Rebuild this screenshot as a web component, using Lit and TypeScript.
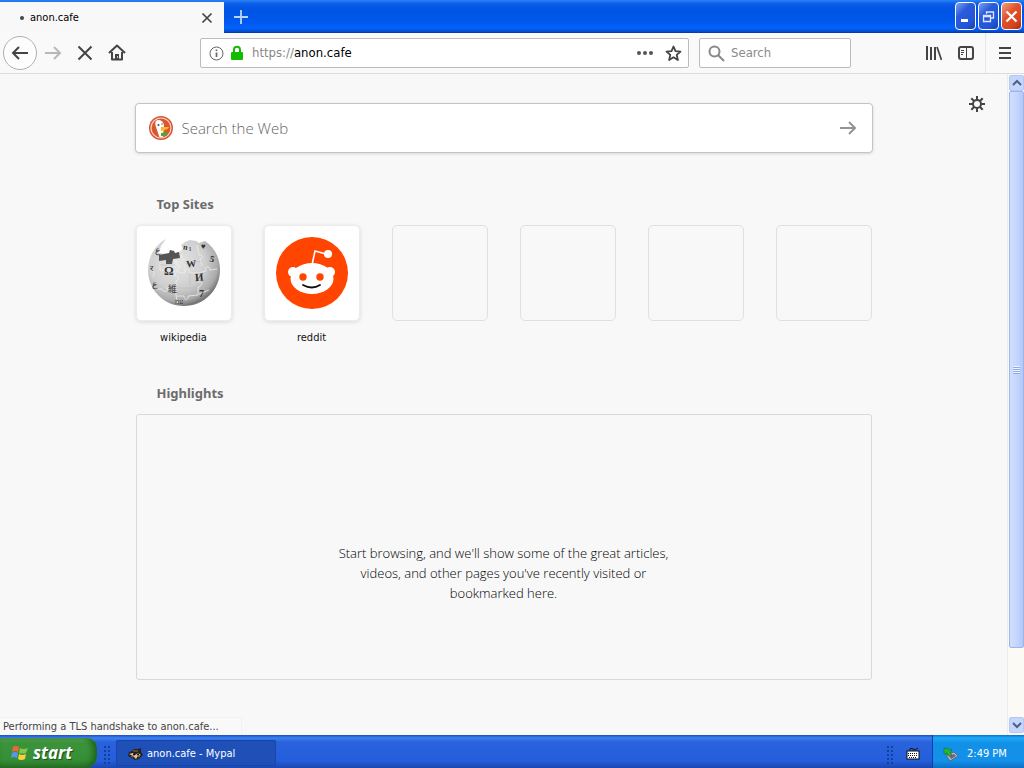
import { LitElement, html, css, svg } from "lit";
import { customElement, state } from "lit/decorators.js";

interface Site { name: string; icon: unknown; }

const wikipedia = svg`
  <defs>
    <radialGradient id="globe" cx="40%" cy="35%" r="65%">
      <stop offset="0" stop-color="#e6e6e6"/><stop offset=".6" stop-color="#cfcfcf"/><stop offset=".88" stop-color="#aaa"/><stop offset="1" stop-color="#777"/>
    </radialGradient>
  </defs>
  <path d="M19 3L14 10L12 17L21 18L22 20L32 16L36 13L34 9L38 6L43 4L49 5L52 7L58 5C67 11 73 21 73 34C73 54 57 70 37 70C17 70 1 54 1 34C1 21 8 9 19 3Z" fill="url(#globe)"/>
  <path d="M12 19L22 17L23 14L27 15L28 17L32 16L33 22L26 23L25 28L19 28L19 24L12 25Z" fill="#555"/>
  <path d="M13 27V34H17C18 31 22 31 22 35H28V40C32 39 33 44 29 45V52H20C21 56 16 57 15 53H4M29 24V28C33 28 34 32 30 33V36L38 37C38 32 43 32 43 37H51V46C56 45 56 50 51 51V59L41 60C42 64 37 65 37 60H29V52M34 18L36 24C40 22 42 26 38 28V36M51 37L59 35C57 30 63 29 63 34L70 33M50 9L52 19C56 18 57 22 53 23L55 30M52 58L62 54M29 60L31 68M4 35C8 34 8 40 5 41" fill="none" stroke="#eee" stroke-width=".8"/>
  <path d="M13 29H28M38 28L54 25M31 52H50M43 37V50" fill="none" stroke="#bbb" stroke-width=".6"/>
  <g fill="#333" font-family="Liberation Serif, serif">
    <text x="17" y="39" font-size="12" font-weight="700">Ω</text>
    <text x="39" y="31" font-size="10" font-weight="700" transform="rotate(-5 44 26)">W</text>
    <text x="48" y="45" font-size="11" font-weight="700" transform="rotate(-5 51 42)">И</text>
    <text x="21" y="56" font-size="9" font-family="Noto Sans CJK JP, sans-serif">維</text>
    <text x="63" y="26" font-size="9" font-weight="700" transform="rotate(12 65 22)">5</text>
    <text x="52" y="61" font-size="10" font-weight="700">7</text>
    <text x="36" y="14" font-size="8" font-weight="700" transform="rotate(10 40 12)">n</text>
    <text x="42" y="15" font-size="8">ı</text>
    <text x="54" y="13" font-size="8">♥</text>
    <text x="3" y="35" font-size="8">र</text>
    <text x="5" y="51" font-size="9">ﻉ</text>
    <text x="8" y="17" font-size="9">ع</text>
    <text x="28" y="68" font-size="7">עמ</text>
  </g>`;

const reddit = svg`
  <circle cx="37" cy="37" r="36" fill="#ff4500"/>
  <g fill="#fff"><circle cx="18" cy="36" r="5"/><circle cx="55" cy="36" r="5"/><ellipse cx="37" cy="42.500" rx="21.500" ry="15.500"/><circle cx="53" cy="18" r="4"/></g>
  <path d="M37 29L40 15L51 18" fill="none" stroke="#fff" stroke-width="1.600"/>
  <circle cx="28" cy="41" r="3.700" fill="#ff4500"/><circle cx="45" cy="41" r="3.700" fill="#ff4500"/>
  <path d="M28 49Q37 54 45 49" fill="none" stroke="#111" stroke-width="1.800" stroke-linecap="round"/>`;

const duck = svg`
  <circle cx="12" cy="12" r="12" fill="#d9532c"/><circle cx="12" cy="12" r="10" fill="#dd5533" stroke="#f7d5c8" stroke-width="1.200"/>
  <path d="M7 5C9 3 14 4 15 9L14 21C12 22 10 21 10 20L7 11C6 8 6 6 7 5Z" fill="#fff"/>
  <path d="M12 11L20 11C19 13 17 14 12 15Z" fill="#fdb913"/><path d="M12 17L18 16V20L12 20Z" fill="#5aa13c"/>
  <circle cx="9.500" cy="9" r="1" fill="#445"/><circle cx="13" cy="8" r=".7" fill="#445"/>`;

@customElement("app-root")
export class AppRoot extends LitElement {
  @state() private sites: (Site | null)[] = [
    { name: "wikipedia", icon: wikipedia }, { name: "reddit", icon: reddit }, null, null, null, null,
  ];

  static styles = css`
    :host { display: flex; flex-direction: column; height: 100vh; overflow: hidden; background: #f8f8f8; color: #111; font: 11px/16px Tahoma, "DejaVu Sans Condensed", "Noto Sans", sans-serif; }
    * { box-sizing: border-box; }
    button, input { font: inherit; color: inherit; border: 0; background: none; padding: 0; margin: 0; outline: 0; }
    button { display: grid; place-items: center; flex: none; }
    svg { display: block; flex: none; }
    .line { fill: none; stroke: #444; stroke-width: 2; }
    h2, p { margin: 0; }

    .tabs { display: flex; height: 33px; flex: none; background: linear-gradient(#2a83f8 0, #0a5ce8 4px, #0054e3 10px, #0058ee 22px, #0262fb 28px, #0450d8 31px, #0236a8 33px); }
    .tab { display: flex; align-items: center; width: 224px; margin-top: 2px; padding: 0 10px 0 20px; background: #f8f8f8; }
    .dot { width: 4px; height: 4px; border-radius: 50%; background: #444; margin-right: 6px; }
    .title { flex: 1; color: #000; }
    .newtab { width: 34px; }
    .window { display: flex; gap: 2px; margin-left: auto; padding: 2px 2px 3px 0; }
    .window button { width: 21px; height: 28px; border: 1px solid #fff; border-radius: 4px; background: linear-gradient(135deg, #7da1f4, #2a5bdc 35%, #2355d8 75%, #1840ad); }
    .window .close { background: linear-gradient(135deg, #f0a084, #e0532c 40%, #d4441f 75%, #a82c0c); }

    .nav { display: flex; align-items: center; height: 41px; flex: none; background: #f9f9fa; border-bottom: 1px solid #ddd; padding: 0 1px 0 3px; }
    .back { width: 34px; height: 34px; border: 1px solid #b0b0b0; border-radius: 50%; background: #fdfdfd; }
    .tool { width: 32px; height: 32px; }
    .address { display: flex; align-items: center; flex: 1; margin-left: 67px; height: 30px; padding: 0 6px 0 8px; background: #fff; border: 1px solid #bcbcbc; border-radius: 2px; font-size: 13px; }
    .url { position: relative; flex: 1; min-width: 0; margin-left: 8px; }
    .url input { display: block; width: 100%; height: 20px; color: transparent; caret-color: #000; }
    .urltext { position: absolute; inset: 0; line-height: 20px; color: #000; pointer-events: none; }
    .urltext span { color: #888; }
    .lock { margin-left: 6px; }
    .dots { margin-right: 12px; }
    .find { display: flex; align-items: center; gap: 6px; width: 152px; margin: 0 67px 0 10px; height: 30px; padding: 0 8px; background: #fff; border: 1px solid #bcbcbc; border-radius: 2px; font-size: 13px; }
    .find input { flex: 1; min-width: 0; }
    input::placeholder { color: #8a8a8a; opacity: 1; }
    .menu { width: 38px; height: 40px; margin-left: 3px; border-left: 1px solid #e6e6e6; }

    .view { position: relative; display: flex; flex: 1; min-height: 0; }
    .page { flex: 1; min-width: 0; display: flex; justify-content: center; position: relative; padding: 29px 24px 0; }
    .gear { position: absolute; right: 20px; top: 20px; width: 20px; height: 20px; }
    .column { width: 100%; max-width: 736px; }
    .search { display: flex; align-items: center; gap: 9px; height: 50px; margin: 0 -1px; padding: 0 15px 0 13px; background: #fff; border: 1px solid #c4c4c4; border-radius: 4px; box-shadow: 0 1px 3px #0002; font: 300 15px/20px "Open Sans", "Noto Sans", sans-serif; }
    .search input { flex: 1; min-width: 0; height: 30px; }
    .search input::placeholder { color: #666; }
    h2 { font: 700 13px/20px "Noto Sans", sans-serif; color: #6c6c6c; padding-left: 21px; }
    .top { margin-top: 41px; }
    .sites { display: grid; grid-template-columns: repeat(6, 96px); justify-content: space-between; margin: 11px 0 38px; }
    .site { height: 120px; color: #111; text-decoration: none; text-align: center; }
    .tile { display: grid; place-items: center; height: 96px; margin-bottom: 9px; border: 1px solid #e0e0e0; border-radius: 5px; }
    .sites > .tile { margin-bottom: 0; }
    .site .tile { background: #fff; border-color: #ececec; box-shadow: 0 1px 4px #0002; }
    .empty { display: flex; align-items: center; justify-content: center; height: 266px; margin-top: 11px; padding-top: 52px; border: 1px solid #d8d8d8; border-radius: 3px; }
    .empty p { width: 344px; text-align: center; font: 13px/20px "Open Sans", "Noto Sans", sans-serif; font-weight: 300; color: #000; }
    .scroll { display: flex; flex-direction: column; width: 17px; padding: 1px 0 2px 1px; background: #fbfaf5; border-left: 1px solid #eeede5; }
    .scroll button { height: 16px; border: 1px solid #b4c8f6; border-radius: 2px; background: #c6d5fc; }
    .track { flex: 1; }
    .thumb { height: 89%; display: grid; place-items: center; background: linear-gradient(90deg, #d2defe, #c3d3fd 60%, #b4c8f6); border: 1px solid #9db5ec; border-radius: 2px; }
    .status { position: absolute; left: 0; bottom: 0; width: 242px; height: 18px; padding-left: 3px; line-height: 18px; color: #444; background: #f9f9f9; border: solid #f2f2f2; border-width: 1px 1px 0 0; white-space: nowrap; }

    .taskbar { display: flex; align-items: stretch; height: 33px; flex: none; color: #fff; background: linear-gradient(#1c50c0 0, #3a81ee 3px, #2a62dc 7px, #245edb 26px, #1c47b0); }
    .start { display: flex; align-items: center; width: 97px; margin-top: 3px; padding-left: 11px; gap: 4px; border-radius: 0 10px 12px 0; background: linear-gradient(#66b764 0, #3c943c 5px, #358f35 22px, #2b742b); box-shadow: inset -4px 0 6px #1c641c; font: italic 700 17px/24px "Noto Sans", sans-serif; text-shadow: 1px 1px 1px #1a4a1a; }
    .grip { width: 7px; margin: 10px 6px 4px; background: radial-gradient(circle, #143f9e 1px, transparent 1px) 0 0 / 4px 4px; }
    .task { display: flex; align-items: center; gap: 4px; width: 160px; margin: 5px 0 2px; padding: 2px 0 0 11px; background: #1e50b8; border: 1px solid #1846a8; border-radius: 2px; }
    .keyboard { display: grid; place-items: center; margin: 4px 12px 0 7px; }
    .right { margin-left: auto; }
    .tray { display: flex; align-items: center; gap: 9px; width: 92px; padding: 5px 0 0 10px; border-left: 1px solid #0b3fa8; background: linear-gradient(#0f70d0 0, #1cabf4 3px, #1290e8 8px, #1391ea 26px, #0e6fc4); }
  `;

  render() {
    return html`
      <header class="tabs">
        <div class="tab"><span class="dot"></span><span class="title">anon.cafe</span>
          <button aria-label="Close tab"><svg width="14" height="14" viewBox="0 0 14 14"><path class="line" d="M2.500 2.500L11.500 11.500M11.500 2.500L2.500 11.500" style="stroke-width:1.700"/></svg></button>
        </div>
        <button class="newtab" aria-label="New tab"><svg width="16" height="16"><path d="M8 1V15M1 8H15" stroke="#b9d6ff" stroke-width="1.800"/></svg></button>
        <div class="window">
          <button aria-label="Minimize"><svg width="15" height="15"><path d="M3 11.500H10" stroke="#fff" stroke-width="3"/></svg></button>
          <button aria-label="Restore"><svg width="15" height="15" fill="none" stroke="#dce7ff"><path d="M5.500 5V3H12.500V9H10" stroke-width="1.300"/><path d="M2.500 6.500H9.500V12.500H2.500ZM2.500 7.500H9.500" stroke-width="1.300"/></svg></button>
          <button class="close" aria-label="Close"><svg width="15" height="15"><path d="M2.500 2.500L12.500 12.500M12.500 2.500L2.500 12.500" stroke="#fff" stroke-width="2.200"/></svg></button>
        </div>
      </header>
      <nav class="nav">
        <button class="back" aria-label="Back"><svg width="18" height="18" class="line"><path d="M17 9H2M8 3L2 9L8 15"/></svg></button>
        <button class="tool" aria-label="Forward"><svg width="18" height="18" class="line" style="stroke:#b8b8b8"><path d="M1 9H16M10 3L16 9L10 15"/></svg></button>
        <button class="tool" aria-label="Stop"><svg width="16" height="16" class="line"><path d="M1.500 1.500L14.500 14.500M14.500 1.500L1.500 14.500"/></svg></button>
        <button class="tool" aria-label="Home"><svg width="18" height="18" viewBox="0 0 18 18" class="line"><path d="M1 9L9 1.500L17 9M4 8V15.500H14V8" stroke-linejoin="round"/><path d="M7 16V10H11V16" fill="#444" stroke="none"/><path d="M9.500 12V14" stroke="#ccc" stroke-width="1"/></svg></button>
        <div class="address">
          <svg width="15" height="15" class="line" style="stroke-width:1;stroke:#666"><circle cx="7.500" cy="7.500" r="6.500"/><path d="M7.500 6.500V11M7.500 3.500V5" style="stroke-width:1.700"/></svg>
          <svg class="lock" width="14" height="16"><path d="M4 8V4.500C4 .8 10 .8 10 4.500V8" fill="none" stroke="#12bc00" stroke-width="2"/><rect x="1" y="7" width="12" height="8" rx="1" fill="#12bc00"/></svg>
          <div class="url"><input aria-label="Address" value="https://anon.cafe"/><div class="urltext" aria-hidden="true"><span>https://</span>anon.cafe</div></div>
          <button class="dots" aria-label="Page actions"><svg width="16" height="6" fill="#555"><circle cx="2" cy="3" r="2"/><circle cx="8" cy="3" r="2"/><circle cx="14" cy="3" r="2"/></svg></button>
          <button aria-label="Bookmark"><svg width="17" height="17" viewBox="0 0 17 17" class="line"><path d="M8.500 1.500L10.500 6.200L15.500 6.600L11.700 9.900L12.900 15L8.500 12.200L4.100 15L5.300 9.900L1.500 6.600L6.500 6.200Z" style="stroke-width:1.800" stroke-linejoin="round"/></svg></button>
        </div>
        <label class="find"><svg width="17" height="17" class="line" style="stroke:#888"><circle cx="6.500" cy="6.500" r="5"/><path d="M10 10L16 16"/></svg><input aria-label="Search" placeholder="Search"/></label>
        <button class="tool" aria-label="Library"><svg width="16" height="16" class="line"><path d="M1 1V15M5 2V15M9 2V15" style="stroke-width:2"/><path d="M11 2L15.500 15" style="stroke-width:1.700"/></svg></button>
        <button class="tool" aria-label="Sidebar"><svg width="16" height="14" class="line"><rect x="1" y="1" width="14" height="12" rx="2"/><path d="M8.500 1V13" style="stroke-width:1"/><path d="M3 4.500H6M3 6.500H6M3 8.500H5" style="stroke-width:1"/></svg></button>
        <button class="menu" aria-label="Menu"><svg width="12" height="12" class="line"><path d="M0 1H12M0 6H12M0 11H12"/></svg></button>
      </nav>
      <div class="view">
        <main class="page">
          <button class="gear" aria-label="Settings"><svg width="16" height="16" class="line"><circle cx="8" cy="8" r="4"/><path d="M8 0V4M8 12V16M0 8H4M12 8H16M2.300 2.300L5 5M11 11L13.700 13.700M13.700 2.300L11 5M5 11L2.300 13.700"/></svg></button>
          <div class="column">
            <form class="search"><svg width="24" height="24">${duck}</svg><input aria-label="Search the Web" placeholder="Search the Web"/><button type="button" aria-label="Go"><svg width="18" height="16" class="line" style="stroke:#949494"><path d="M1 8H16M10 2L16 8L10 14"/></svg></button></form>
            <h2 class="top">Top Sites</h2>
            <div class="sites">${this.sites.map(s => s
              ? html`<a class="site" href="#${s.name}"><div class="tile"><svg width="74" height="74" viewBox="0 0 74 74">${s.icon}</svg></div>${s.name}</a>`
              : html`<div class="tile"></div>`)}</div>
            <h2>Highlights</h2>
            <section class="empty"><p>Start browsing, and we'll show some of the great articles, videos, and other pages you've recently visited or bookmarked here.</p></section>
          </div>
        </main>
        <div class="scroll">
          <button aria-label="Scroll up"><svg width="10" height="8" class="line" style="stroke:#4d6185"><path d="M1 6L5 2L9 6"/></svg></button>
          <div class="track"><div class="thumb"><svg width="7" height="8"><path d="M0 .5H7M0 2.500H7M0 4.500H7M0 6.500H7" stroke="#eef4fe"/><path d="M0 1.500H7M0 3.500H7M0 5.500H7M0 7.500H7" stroke="#8caae6"/></svg></div></div>
          <button aria-label="Scroll down"><svg width="10" height="8" class="line" style="stroke:#4d6185"><path d="M1 2L5 6L9 2"/></svg></button>
        </div>
        <div class="status">Performing a TLS handshake to anon.cafe...</div>
      </div>
      <footer class="taskbar">
        <button class="start"><svg width="18" height="18" viewBox="0 0 18 18"><path d="M2 3Q5 1 8 3L7 8Q4 6 1 8Z" fill="#f0653a"/><path d="M9 4Q12 6 17 4L15 9Q12 10 8 9Z" fill="#83c84a"/><path d="M1 9Q4 7 7 9L6 14Q3 12 0 14Z" fill="#5a94ee"/><path d="M8 10Q11 12 15 10L14 15Q10 17 7 15Z" fill="#fbd03a"/></svg>start</button>
        <div class="grip"></div>
        <button class="task"><svg width="15" height="14" viewBox="0 0 15 14"><path d="M1 5L4 4L6 2L10 2L13 1L13 5L15 8L11 12L7 13L4 11L0 9Z" fill="#2a211c"/><path d="M1 7L5 6L7 8L10 6L13 8L10 9L8 12L5 9Z" fill="#d9c3a0"/><path d="M5 4L10 4M3 9L5 10M10 10L12 9" stroke="#a06a38"/><circle cx="6" cy="7.500" r="1"/><circle cx="10" cy="7.500" r="1"/></svg>anon.cafe - Mypal</button>
        <div class="grip right"></div>
        <button class="keyboard" aria-label="Input language"><svg width="14" height="13"><path d="M3 3Q5 0 7 2T12 1" fill="none" stroke="#111"/><rect x="1" y="4" width="12" height="8" fill="#fff" stroke="#111"/><path d="M2 6.500H12M2 8.500H12M3 10.500H11" stroke="#111" stroke-dasharray="1 1"/></svg></button>
        <div class="tray"><svg width="15" height="15" viewBox="0 0 15 15"><path d="M3 8L11 5L15 9L7 14Z" fill="#b5bbc2" stroke="#555" stroke-width=".7"/><path d="M6 9L11 7L13 9L8 12Z" fill="#668"/><path d="M1 1L9 3L7 5L9 8L5 9L4 6L1 7Z" fill="#25b82c" stroke="#116b18" stroke-width=".5"/></svg><time>2:49 PM</time></div>
      </footer>`;
  }
}
